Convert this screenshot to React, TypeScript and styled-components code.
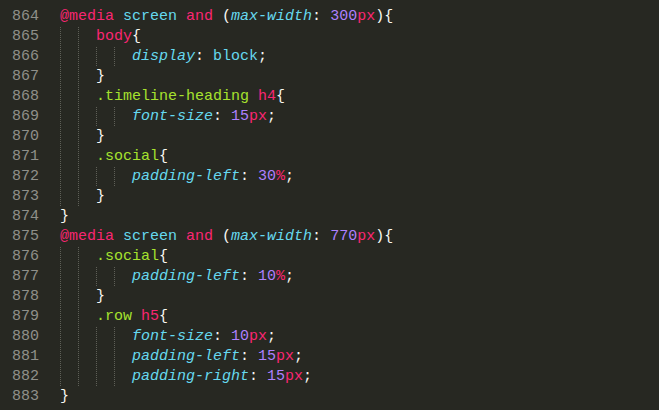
import React from "react";
import styled, { createGlobalStyle } from "styled-components";

const Global = createGlobalStyle`
  html, body { margin: 0; padding: 0; background: #272822; overflow: hidden; }
  #root { width: 659px; height: 410px; overflow: hidden; }
`;

type Kind = "k" | "c" | "ci" | "g" | "n" | "w";
type Tok = [string, Kind];
type LineData = { no: number; indent: number; toks: Tok[] };

const colors: Record<Kind, string> = {
  k: "#F92672",
  c: "#66D9EF",
  ci: "#66D9EF",
  g: "#A6E22E",
  n: "#AE81FF",
  w: "#F8F8F2",
};

const Editor = styled.div`
  background: #272822;
  width: 659px;
  height: 410px;
  overflow: hidden;
  font-family: "Liberation Mono", "DejaVu Sans Mono", monospace;
  font-size: 15px;
`;

const Lines = styled.div`
  display: flex;
  flex-direction: column;
  margin-top: -13px;
`;

const Row = styled.div`
  display: flex;
  height: 20px;
  line-height: 20px;
`;

const LineNo = styled.span`
  width: 39px;
  text-align: right;
  color: #90908a;
  flex: none;
`;

const Code = styled.span`
  margin-left: 21px;
  white-space: pre;
  display: flex;
  height: 20px;
`;

const Guide = styled.span`
  display: inline-block;
  width: 18px;
  height: 20px;
  flex: none;
  background-image: linear-gradient(to bottom, #5e5f57 50%, transparent 50%);
  background-size: 1px 2px;
  background-repeat: repeat-y;
  background-position: 0 0;
`;

const Token = styled.span<{ $kind: Kind }>`
  color: ${(p) => colors[p.$kind]};
  font-style: ${(p) => (p.$kind === "ci" ? "italic" : "normal")};
`;

const media = (v: string): Tok[] => [
  ["@media", "k"],
  [" ", "w"],
  ["screen", "c"],
  [" ", "w"],
  ["and", "k"],
  [" (", "w"],
  ["max-width", "ci"],
  [": ", "w"],
  [v, "n"],
  ["px", "k"],
  ["){", "w"],
];

const prop = (name: string, num: string, unit: string): Tok[] => [
  [name, "ci"],
  [": ", "w"],
  [num, "n"],
  [unit, "k"],
  [";", "w"],
];

const data: LineData[] = [
  { no: 863, indent: 0, toks: [] },
  { no: 864, indent: 0, toks: media("300") },
  { no: 865, indent: 2, toks: [["body", "k"], ["{", "w"]] },
  { no: 866, indent: 4, toks: [["display", "ci"], [": ", "w"], ["block", "c"], [";", "w"]] },
  { no: 867, indent: 2, toks: [["}", "w"]] },
  { no: 868, indent: 2, toks: [[".timeline-heading", "g"], [" ", "w"], ["h4", "k"], ["{", "w"]] },
  { no: 869, indent: 4, toks: prop("font-size", "15", "px") },
  { no: 870, indent: 2, toks: [["}", "w"]] },
  { no: 871, indent: 2, toks: [[".social", "g"], ["{", "w"]] },
  { no: 872, indent: 4, toks: prop("padding-left", "30", "%") },
  { no: 873, indent: 2, toks: [["}", "w"]] },
  { no: 874, indent: 0, toks: [["}", "w"]] },
  { no: 875, indent: 0, toks: media("770") },
  { no: 876, indent: 2, toks: [[".social", "g"], ["{", "w"]] },
  { no: 877, indent: 4, toks: prop("padding-left", "10", "%") },
  { no: 878, indent: 2, toks: [["}", "w"]] },
  { no: 879, indent: 2, toks: [[".row", "g"], [" ", "w"], ["h5", "k"], ["{", "w"]] },
  { no: 880, indent: 4, toks: prop("font-size", "10", "px") },
  { no: 881, indent: 4, toks: prop("padding-left", "15", "px") },
  { no: 882, indent: 4, toks: prop("padding-right", "15", "px") },
  { no: 883, indent: 0, toks: [["}", "w"]] },
];

export default function App() {
  return (
    <>
      <Global />
      <Editor>
        <Lines>
          {data.map((l) => (
            <Row key={l.no}>
              <LineNo>{l.no}</LineNo>
              <Code>
                {Array.from({ length: l.indent }).map((_, i) => (
                  <Guide key={i} />
                ))}
                {l.toks.map((t, i) => (
                  <Token key={i} $kind={t[1]}>
                    {t[0]}
                  </Token>
                ))}
              </Code>
            </Row>
          ))}
        </Lines>
      </Editor>
    </>
  );
}
